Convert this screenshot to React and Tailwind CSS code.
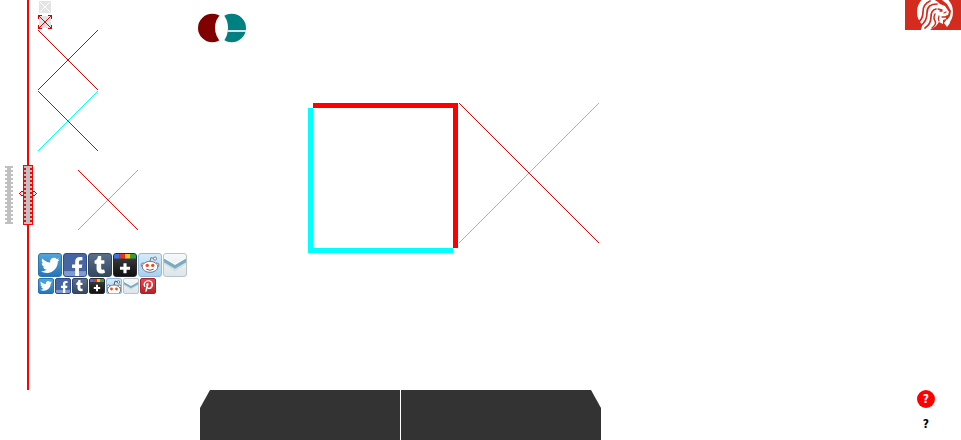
import React from "react";
import { FaTwitter, FaFacebookF, FaTumblr, FaPinterestP } from "react-icons/fa";

function Cross({ size, down, up, className }) {
  return (
    <svg width={size} height={size} shapeRendering="crispEdges" className={"block shrink-0 " + (className || "")} aria-hidden="true">
      <path d={`M0 ${size}L${size} 0`} stroke={up} />
      <path d={`M0 0L${size} ${size}`} stroke={down} />
    </svg>
  );
}

const teeth = Array.from({ length: 15 }, (_, i) => i * 4);

function Ruler() {
  return (
    <svg width="8" height="58" shapeRendering="crispEdges" fill="#c0c0c0" className="block" aria-hidden="true">
      <rect x="2" width="4" height="58" />
      {teeth.map((y) => <rect key={y} y={y} width="8" height="2" />)}
    </svg>
  );
}

function RulerHandle() {
  return (
    <svg width="18" height="60" shapeRendering="crispEdges" className="block" aria-hidden="true">
      <rect x="4" width="10" height="60" fill="#ff0000" />
      <g fill="#c0c0c0">
        <rect x="7" y="1" width="4" height="58" />
        {teeth.map((y) => <rect key={y} x="5" y={y + 1} width="8" height="2" />)}
      </g>
      <g fill="#e00000">
        <path d="M2 26h2v1h-2zM1 27h1v1h-1zM0 28h1v1h-1zM1 29h1v1h-1zM2 30h2v1h-2z" />
        <path d="M14 26h2v1h-2zM16 27h1v1h-1zM17 28h1v1h-1zM16 29h1v1h-1zM14 30h2v1h-2z" />
      </g>
    </svg>
  );
}

function Reddit() {
  return (
    <svg viewBox="0 0 24 24" className="size-full" aria-hidden="true">
      <g fill="#fff" stroke="#68737b" strokeWidth="1">
        <path d="M12 8l1-4 4 1" fill="none" />
        <circle cx="17.5" cy="5" r="1.7" />
        <circle cx="4.5" cy="12" r="2.2" />
        <circle cx="19.5" cy="12" r="2.2" />
        <ellipse cx="12" cy="14" rx="8.5" ry="6" />
      </g>
      <circle cx="9" cy="12.5" r="1.8" fill="#f14a22" />
      <circle cx="15" cy="12.5" r="1.8" fill="#f14a22" />
      <path d="M8 16.5q4 2.5 8 0" fill="none" stroke="#555" />
    </svg>
  );
}

function RedditSmall() {
  return (
    <svg viewBox="0 0 14 14" className="size-full" aria-hidden="true">
      <path d="M7 6l1-4 3 1" fill="none" stroke="#555e66" />
      <g fill="#fff" stroke="#555e66" strokeWidth="0.8">
        <circle cx="11.5" cy="3" r="1.3" />
        <circle cx="1.5" cy="7.5" r="1.6" />
        <circle cx="12.5" cy="7.5" r="1.6" />
        <ellipse cx="7" cy="11" rx="6.6" ry="5" />
      </g>
      <circle cx="4.5" cy="10" r="1.4" fill="#f14a22" />
      <circle cx="9.5" cy="10" r="1.4" fill="#f14a22" />
    </svg>
  );
}

function Mail() {
  return (
    <svg viewBox="0 0 24 24" className="size-full" aria-hidden="true">
      <path d="M0 7l12 8 12-8v4l-12 8L0 11z" fill="#d3dfe4" />
      <path d="M0 5l12 7 12-7v4l-12 7L0 9z" fill="#78adbf" />
      <path d="M0 4l12 7 12-7" fill="none" stroke="#fff" />
    </svg>
  );
}

function Plus() {
  return (
    <svg viewBox="0 0 24 24" className="size-full" aria-hidden="true">
      <path d="M0 0h6v5H0z" fill="#3b74e5" />
      <path d="M6 0h6v5H6z" fill="#e23525" />
      <path d="M12 0h6v5h-6z" fill="#f5c518" />
      <path d="M18 0h6v5h-6z" fill="#27a243" />
      <path d="M12 10v11M6.5 15.5h11" stroke="#fff" strokeWidth="3.4" />
    </svg>
  );
}

const networks = [
  { name: "Twitter", look: "bg-linear-to-b from-[#52a5dc] to-[#2476ba] border-[#2d74ac]", icon: <FaTwitter className="size-[85%]" /> },
  { name: "Facebook", look: "bg-linear-to-b from-[#4665a5] from-75% to-[#7f9bd0] to-80% border-[#2f4c87] items-end", icon: <FaFacebookF className="ml-[20%] h-[88%] w-[75%]" /> },
  { name: "Tumblr", look: "bg-linear-to-b from-[#5a6f89] to-[#34485f] border-[#34465d]", icon: <FaTumblr className="size-4/5" /> },
  { name: "Google Plus", look: "bg-linear-to-b from-[#444444] to-[#111111] border-[#292929]", icon: <Plus /> },
  { name: "Reddit", look: "bg-linear-to-b from-[#d4eafa] to-[#a9d1f2] border-[#8fb9dd]", icon: <Reddit />, small: <RedditSmall /> },
  { name: "Email", look: "bg-linear-to-b from-[#f6f9fa] to-[#dce5ea] border-[#b8c3ca]", icon: <Mail /> },
  { name: "Pinterest", look: "bg-linear-to-b from-[#e44a4b] to-[#bd1e25] border-[#a92028]", icon: <FaPinterestP className="size-[90%]" /> },
];

function ShareRow({ items, box, small }) {
  return (
    <nav aria-label="Share" className="flex gap-px">
      {items.map((n) => (
        <a key={n.name} href="#share" aria-label={n.name} className={`flex shrink-0 items-center justify-center overflow-hidden border text-white ${box} ${n.look}`}>
          {(small && n.small) || n.icon}
        </a>
      ))}
    </nav>
  );
}

function Rings() {
  return (
    <svg width="48" height="30" className="block" aria-hidden="true">
      <circle cx="14.3" cy="15" r="14.3" fill="#800000" />
      <circle cx="33.7" cy="15" r="14.3" fill="#008080" />
      <path d="M24 0Q17 6 17 15Q17 24 24 30Q30 24 30 15Q30 6 24 0Z" fill="#fff" />
      <path d="M29 18h19" stroke="#d2e7e7" strokeWidth="2" />
    </svg>
  );
}

function Lion() {
  return (
    <svg width="56" height="30" className="block bg-[#d52b1e]" aria-hidden="true">
      <circle cx="30" cy="12" r="18" fill="#fff" />
      <path d="M30 0H37L42 4 46 11 45 16 42 20 45 25 41 30H24L30 25 35 16 34 6z" fill="#d52b1e" />
      <path d="M24 0Q31-1 35 4L40 6 44 12 43 15 40 16 41 19 38 20 38 24 34 22 31 26 25 30H15L20 20z" fill="#fff" />
      <path d="M42 19l3 4-3 4-3-4z" fill="#fff" />
      <path d="M9 30V14l3 4-1 4 4-1-2 5 4-1-1 5z" fill="#d52b1e" />
      <g fill="none" stroke="#d52b1e" strokeLinecap="round" strokeLinejoin="round">
        <path d="M25 1Q18 4 18 12T12 23" strokeWidth="1.7" />
        <path d="M32 4Q22 4 22 13T15 26" strokeWidth="1.7" />
        <path d="M31 9Q26 10 26 17T20 28" strokeWidth="1.7" />
        <path d="M30 14Q28 18 30 21T27 28" strokeWidth="1.5" />
        <path d="M33 9l4 1M35 11h2M41 12l-2 1M37 17h3M34 16q-1 3 0 5" strokeWidth="1.3" />
      </g>
    </svg>
  );
}

function CloseButton({ hover }) {
  return (
    <button aria-label={hover ? "Close, highlighted" : "Close"} className="block">
      <svg width="15" height="15" className="block" shapeRendering="crispEdges">
        <rect x="1" y="1" width="12" height="12" fill="#e4e4e4" />
        <path d={hover ? "M1 1l12 12M13 1L1 13" : "M2 2l10 10M12 2L2 12"} stroke={hover ? "#df0000" : "#fff"} />
        {hover && <path d="M0 4V0h4v1H1v3zM10 0h4v4h-1V1h-3zM0 10h1v3h3v1H0zM13 10h1v4h-4v-1h3z" fill="#df0000" />}
      </svg>
    </button>
  );
}

export default function App() {
  return (
    <div className="flex min-h-screen bg-white font-['Open_Sans',sans-serif]">
      <aside className="flex w-[38px] shrink-0 items-start">
        <div className="mt-[166px] pl-[5px]"><Ruler /></div>
        <div className="ml-[6px] flex h-[390px] flex-col items-center">
          <div className="h-[165px] w-[2px] bg-[#ff0000]" />
          <RulerHandle />
          <div className="w-[2px] grow bg-[#ff0000]" />
        </div>
      </aside>

      <section className="flex w-40 shrink-0 flex-col items-start">
        <CloseButton />
        <CloseButton hover />
        <Cross size={60} down="#df0000" up="#df0000" />
        <Cross size={60} down="#df0000" up="#00ffff" className="mt-px" />
        <Cross size={60} down="#ff0000" up="#00f0f0" className="mt-[19px] ml-10" />
        <div className="mt-[23px] flex flex-col gap-px">
          <ShareRow items={networks.slice(0, 6)} box="size-6 rounded-[3px]" />
          <ShareRow items={networks} box="size-4 rounded-[2px]" small />
        </div>
      </section>

      <main className="flex flex-col">
        <div className="pt-[13px]"><Rings /></div>
        <div className="mt-[60px] ml-[110px] flex items-start gap-px">
          <svg width="150" height="150" shapeRendering="crispEdges" className="block" aria-hidden="true">
            <path d="M2.5 5V147.5H145" fill="none" stroke="#00ffff" strokeWidth="5" />
            <path d="M5 2.5H147.5V145" fill="none" stroke="#ff0000" strokeWidth="5" />
          </svg>
          <Cross size={140} down="#e80000" up="#00ffff" />
        </div>
        <div className="mt-auto ml-[2px] flex gap-px">
          <button aria-label="Left tab" className="h-[50px] w-[200px] bg-[#333333] [clip-path:polygon(10px_0,100%_0,100%_100%,0_100%,0_18px)]" />
          <button aria-label="Right tab" className="h-[50px] w-[200px] bg-[#333333] [clip-path:polygon(0_0,190px_0,100%_18px,100%_100%,0_100%)]" />
        </div>
      </main>

      <aside className="ml-auto flex w-14 shrink-0 flex-col">
        <Lion />
        <div className="mt-auto mb-[7px] ml-3 flex flex-col gap-[7px] font-['DejaVu_Sans_Condensed','DejaVu_Sans',sans-serif] text-xs leading-none font-bold">
          <button className="flex size-[18px] items-center justify-center rounded-full bg-[#ff0000] text-white">?</button>
          <button className="flex size-[18px] items-center justify-center text-black">?</button>
        </div>
      </aside>
    </div>
  );
}
